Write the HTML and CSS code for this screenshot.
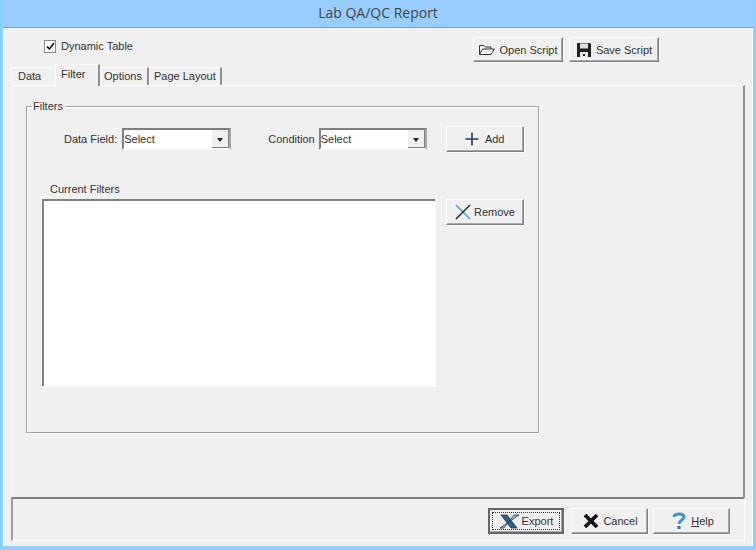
FILE: index.html
```html
<!DOCTYPE html>
<html lang="en">
<head>
    <meta charset="UTF-8">
    <title>Lab QA/QC Report</title>
    <link rel="stylesheet" href="styles.css">
</head>
<body>
    <div class="window">
        <div class="title">Lab QA/QC Report</div>
        <div class="client">
            <div class="top-row">
                <label class="check"><span class="check-box"><svg width="9" height="9" viewBox="0 0 9 9"><path d="M1 4.5 L3.5 7 L8 1" fill="none" stroke="#222" stroke-width="1.8"/></svg></span>Dynamic Table</label>
                <div class="top-buttons">
                    <button class="btn btn-script btn-open"><svg width="18" height="14" viewBox="0 0 18 14"><path d="M1.5 11.5 V2.5 H6 L7.5 4 H13 V6 M1.5 11.5 L4.5 6 H16.5 L13 11.5 Z" fill="none" stroke="#333" stroke-width="1"/></svg>Open Script</button>
                    <button class="btn btn-script"><svg width="16" height="16" viewBox="0 0 16 16"><path d="M1 1 H14 L15 2 V15 H1 Z" fill="#222"/><rect x="4" y="1.5" width="8" height="5" fill="#ddd"/><rect x="4" y="10" width="8" height="5" fill="#eee"/><rect x="7" y="12" width="2" height="2" fill="#222"/></svg>Save Script</button>
                </div>
            </div>
            <div class="tabs">
                <div class="tab tab-data">Data</div>
                <div class="tab tab-active">Filter</div>
                <div class="tab tab-options">Options</div>
                <div class="tab tab-layout">Page Layout</div>
            </div>
            <div class="tab-page">
                <fieldset class="group">
                    <legend>Filters</legend>
                    <div class="filter-row">
                        <span class="field-label">Data Field:</span>
                        <div class="combo combo-first">Select<span class="combo-arrow"></span></div>
                        <span class="field-label label-condition">Condition</span>
                        <div class="combo">Select<span class="combo-arrow"></span></div>
                        <button class="btn btn-side"><svg width="14" height="14" viewBox="0 0 14 14"><path d="M7 0.5 V13.5 M0.5 7 H13.5" stroke="#1c3c5c" stroke-width="1.6"/></svg>Add</button>
                    </div>
                    <div class="list-row">
                        <div class="list-col">
                            <div class="list-label">Current Filters</div>
                            <div class="list-box"></div>
                        </div>
                        <button class="btn btn-side btn-remove"><svg width="16" height="16" viewBox="0 0 16 16"><path d="M1 1 L15 15" stroke="#3aa0d8" stroke-width="1.5"/><path d="M15 1 L1 15" stroke="#222" stroke-width="1.5"/></svg>Remove</button>
                    </div>
                </fieldset>
            </div>
            <div class="footer">
                <button class="btn btn-foot btn-default"><span class="focus-ring"><svg width="22" height="15" viewBox="0 0 22 15"><path d="M2 1 H8 L18 14 H12 Z" fill="#2f5f8f" stroke="#1c3040" stroke-width="0.8"/><path d="M20 1 H15 L5 14 H1 Z" fill="#9fc4e0" stroke="#1c3040" stroke-width="0.8"/></svg>Export</span></button>
                <button class="btn btn-foot"><svg width="16" height="16" viewBox="0 0 16 16"><path d="M2 2 L14 14 M14 2 L2 14" stroke="#111" stroke-width="3.8"/></svg>Cancel</button>
                <button class="btn btn-foot"><svg width="16" height="18" viewBox="0 0 16 18"><path d="M3 5 C3 1.5 13 0.5 13 5 C13 8 8 8 8 12" fill="none" stroke="#3f93c8" stroke-width="3"/><rect x="6.5" y="14" width="3" height="3" fill="#2b6f9f"/></svg><span><u>H</u>elp</span></button>
            </div>
        </div>
    </div>
</body>
</html>
```

FILE: styles.css
```css
* {
    box-sizing: border-box;
}
body {
    margin: 0;
    font-family: "Liberation Sans", Arial, sans-serif;
    font-size: 11px;
    color: #333;
    background-color: #99ccff;
}
.window {
    width: 756px;
    height: 550px;
    display: flex;
    flex-direction: column;
    padding: 0 3px 4px 3px;
    background: linear-gradient(to right, #7fd4f4 0, #99ccff 3px, #99ccff 753px, #7fd4f4 756px);
}
.title {
    height: 27px;
    line-height: 26px;
    text-align: center;
    font-family: "Open Sans", sans-serif;
    font-size: 14px;
    color: #444;
}
.client {
    flex: 1;
    display: flex;
    flex-direction: column;
    background: #f0f0f0;
    border-top: 1px solid #6fa4dc;
    padding: 0 8px 5px 8px;
    box-shadow: inset 1px 0 #fff, inset -1px 0 #fff;
}
.top-row {
    height: 36px;
    display: flex;
    justify-content: space-between;
    padding: 9px 86px 0 33px;
}
.check {
    display: flex;
    align-items: flex-start;
    gap: 5px;
    padding-top: 3px;
    line-height: 13px;
}
.check-box {
    width: 12px;
    height: 13px;
    background: #fff;
    border: 1px solid #8a8a8a;
    display: flex;
    align-items: center;
    justify-content: center;
}
.top-buttons {
    display: flex;
    gap: 6px;
}
.btn {
    display: flex;
    align-items: center;
    justify-content: center;
    gap: 4px;
    padding: 0;
    font: inherit;
    color: #333;
    background: #f0f0f0;
    border: 1px solid;
    border-color: #fff #808080 #808080 #fff;
    box-shadow: inset -1px -1px #a8a8a8, 1px 1px #fafafa;
}
.btn-script {
    width: 90px;
    height: 25px;
}
.btn-open {
    gap: 3px;
}
.tabs {
    height: 21px;
    display: flex;
    align-items: flex-end;
    white-space: nowrap;
}
.tab {
    height: 18px;
    line-height: 17px;
    border-top: 1px solid #fff;
    border-left: 1px solid #fff;
    border-right: 2px solid #909090;
}
.tab-data {
    width: 44px;
    padding-left: 6px;
    border-right: none;
}
.tab-active {
    height: 22px;
    width: 45px;
    line-height: 18px;
    margin-bottom: -1px;
    padding-left: 5px;
    position: relative;
    background: #f0f0f0;
}
.tab-options {
    width: 49px;
    padding-left: 3px;
}
.tab-layout {
    width: 73px;
    padding-left: 4px;
}
.tab-page {
    flex: 1;
    border-top: 1px solid #fff;
    border-left: 1px solid #fff;
    border-right: 2px solid #909090;
    padding: 13px 0 0 14px;
}
.group {
    width: 513px;
    height: 334px;
    margin: 0;
    padding: 0;
    border: 1px solid #a0a0a0;
    box-shadow: inset 1px 1px #fff, 1px 1px #fff;
}
.group legend {
    margin-left: 5px;
    padding: 0 2px 0 1px;
    line-height: 14px;
}
.filter-row {
    display: flex;
    align-items: center;
    height: 26px;
    margin-top: 13px;
    padding-left: 37px;
}
.field-label {
    margin-right: 5px;
}
.label-condition {
    margin-left: 37px;
    margin-right: 4px;
}
.combo {
    width: 108px;
    height: 22px;
    line-height: 18px;
    background: #fff;
    border: 2px solid;
    border-color: #808080 #a8a8a8 #f8f8f8 #808080;
    display: flex;
    justify-content: space-between;
}
.combo-first {
    width: 109px;
}
.combo-arrow {
    width: 17px;
    height: 18px;
    background: #f0f0f0;
    border-right: 1px solid #808080;
    border-bottom: 1px solid #808080;
    position: relative;
}
.combo-arrow::after {
    content: "";
    position: absolute;
    left: 5px;
    top: 8px;
    border: 3px solid transparent;
    border-top: 4px solid #222;
    border-bottom: none;
}
.btn-side {
    width: 78px;
    height: 26px;
    margin-left: 19px;
    gap: 6px;
}
.list-row {
    display: flex;
    align-items: flex-start;
    margin-top: 47px;
    padding-left: 15px;
}
.list-col {
    margin-top: -17px;
}
.list-label {
    padding-left: 8px;
    line-height: 14px;
    margin-bottom: 3px;
}
.list-box {
    width: 393px;
    height: 187px;
    background: #fff;
    border-top: 2px solid #808080;
    border-left: 2px solid #808080;
    box-shadow: 1px 1px #fafafa;
}
.btn-remove {
    margin-left: 11px;
    gap: 3px;
}
.footer {
    height: 44px;
    display: flex;
    justify-content: flex-end;
    gap: 6px;
    padding: 9px 14px 0 0;
    border-top: 2px solid #808080;
    border-left: 2px solid #a0a0a0;
    border-bottom: 1px solid #fff;
    border-right: 1px solid #fff;
}
.btn-foot {
    width: 77px;
    height: 26px;
    padding-left: 2px;
    gap: 4px;
}
.btn-foot + .btn-foot + .btn-foot {
    margin-left: -1px;
}
.btn-default {
    width: 76px;
    margin-right: 1px;
    border: 2px solid #666;
    padding: 2px;
}
.focus-ring {
    flex: 1;
    height: 100%;
    display: flex;
    align-items: center;
    justify-content: center;
    gap: 1px;
    border: 1px dotted #333;
}
```
